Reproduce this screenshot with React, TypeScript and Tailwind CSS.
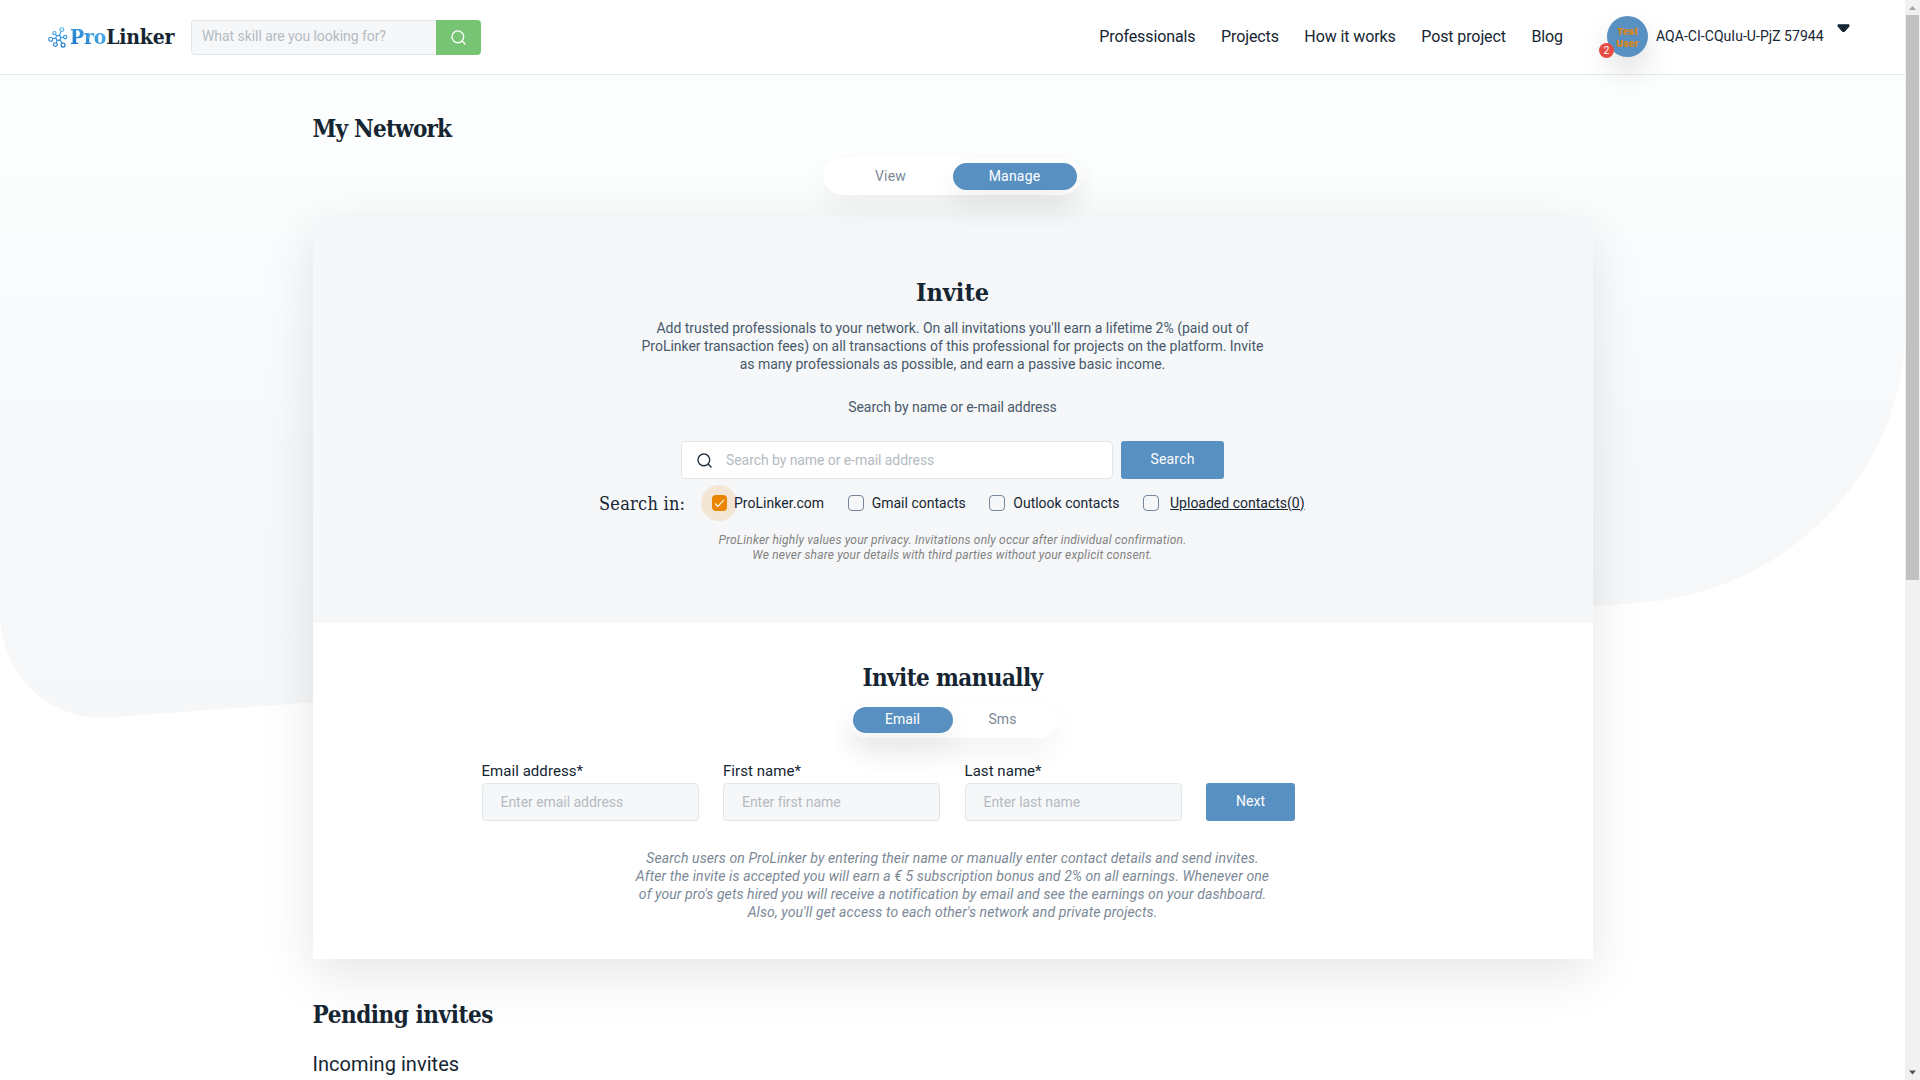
import React from "react";

const slab = "font-['DejaVu_Serif_Condensed','DejaVu_Serif',serif]";

function SearchIcon({ className }: { className: string }) {
  return (
    <svg viewBox="0 0 16 16" fill="none" stroke="currentColor" strokeWidth="1.4" strokeLinecap="round" className={className}>
      <circle cx="7.3" cy="7.3" r="6.3" />
      <path d="M12 12l3 3" />
    </svg>
  );
}

function Logo() {
  return (
    <div className="flex h-[24px] items-center">
      <svg viewBox="0 0 20 21" className="h-[21px] w-[20px] shrink-0" fill="none" stroke="url(#lg)" strokeWidth="1.15">
        <defs>
          <linearGradient id="lg" x1="0" y1="0" x2="0" y2="21" gradientUnits="userSpaceOnUse">
            <stop offset="0" stopColor="#5ab9f0" />
            <stop offset="1" stopColor="#1272c8" />
          </linearGradient>
        </defs>
        <circle cx="10.4" cy="10.8" r="2.5" />
        <circle cx="13.8" cy="2.6" r="1.9" />
        <circle cx="6.4" cy="6.1" r="1.6" />
        <circle cx="17.2" cy="10.1" r="1.7" />
        <circle cx="2.7" cy="12.2" r="2" />
        <circle cx="7.4" cy="17.6" r="1.9" />
        <circle cx="15.1" cy="18.1" r="2" />
        <path d="M11.4 8.5l1.6-4.1M8.9 8.9L7.400 7.400M12.900 10.500l2.600-.3M8 11.300l-3.300.5M9.300 13l-1.100 2.800M11.900 12.800l2 3.500" />
      </svg>
      <span className={`${slab} ml-[2px] whitespace-nowrap text-[21px] font-bold leading-[24px] tracking-[-0.2px] text-[#152532]`}>
        <span className="bg-gradient-to-bl from-[#5cc0f5] to-[#0b6cc4] bg-clip-text text-transparent">Pro</span>Linker
      </span>
    </div>
  );
}

function Header() {
  return (
    <header className="relative z-10 flex h-[75px] items-start border-b border-[#e3e8eb] bg-white">
      <div className="ml-[48px] mt-[25px] w-[143px]"><Logo /></div>
      <div className="mt-[20px] flex h-[35px] w-[290px] text-[14px]">
        <div className="w-[245px] rounded-l-[4px] border border-r-0 border-[#dfe6ea] bg-[#f6f7f9] pl-[10px] leading-[31px] tracking-[-0.06px] text-[#b4bbc2]">What skill are you looking for?</div>
        <div className="flex w-[45px] items-center justify-center rounded-r-[4px] bg-[#76c474] text-white"><SearchIcon className="size-[15px]" /></div>
      </div>
      <nav className="ml-auto mt-[25px] flex gap-[25.5px] text-[16px] leading-[24px] tracking-[-0.1px] text-[#152532]">
        <span>Professionals</span><span>Projects</span><span>How it works</span><span>Post project</span><span>Blog</span>
      </nav>
      <div className="relative ml-[44px] mt-[16px] h-[41px] w-[41px]">
        <div className="flex size-[41px] flex-col items-center justify-center rounded-full bg-[#5990c2] pt-[3px] font-['Inter',sans-serif] text-[9.5px] font-black leading-[12px] text-[#d5861c] shadow-[0_15px_30px_rgba(0,0,0,0.13)]">
          <span>Test</span><span>User</span>
        </div>
        <span className="absolute -left-[8px] top-[27px] flex size-[15px] items-center justify-center rounded-full bg-[#e94b43] text-[10.5px] text-white">2</span>
      </div>
      <span className="ml-[8px] mt-[25px] w-[170px] whitespace-nowrap text-[14px] leading-[22px] tracking-[0.04px] text-[#152532]">AQA-CI-CQuIu-U-PjZ 57944</span>
      <svg viewBox="0 0 13 9" className="ml-[11px] mr-[55px] mt-[24px] h-[9px] w-[13px]"><path d="M1 .8h11v1.5L7.5 7.5h-2L1 2.3z" fill="#152532" stroke="#152532" strokeWidth="1" strokeLinejoin="round" /></svg>
    </header>
  );
}

function Check({ label }: { label: string }) {
  return (
    <div className="flex items-center">
      <span className="size-[16px] rounded-[4px] border border-[#75869a]" />
      <span className="ml-[8px]">{label}</span>
    </div>
  );
}

function Field({ label, hint }: { label: string; hint: string }) {
  return (
    <div className="w-[217px]">
      <div className="h-[23px] text-[15px] leading-[22px] tracking-[0.05px] text-[#152532]">{label}</div>
      <div className="h-[38px] rounded-[4px] border border-[#e0e6ea] bg-[#f6f7f9] pl-[18px] text-[14px] leading-[37px] tracking-[-0.04px] text-[#b4bbc2]">{hint}</div>
    </div>
  );
}

export default function App() {
  return (
    <div className="flex h-[1080px] w-[1920px] overflow-hidden bg-white font-['Roboto',sans-serif]">
      <div className="relative h-full w-[1905px] overflow-hidden">
        <svg className="absolute left-0 top-0 h-[1080px] w-[1905px]" viewBox="0 0 1905 1080">
          <defs>
            <linearGradient id="bg" x1="0" y1="75" x2="0" y2="700" gradientUnits="userSpaceOnUse">
              <stop offset="0" stopColor="#fdfefe" />
              <stop offset="0.25" stopColor="#fbfcfd" />
              <stop offset="0.6" stopColor="#f7f8fa" />
              <stop offset="1" stopColor="#f5f7f9" />
            </linearGradient>
          </defs>
          <path d="M0 75V618C4 674 45 718 103 718L1648 602C1790 588 1905 470 1905 330V75Z" fill="url(#bg)" />
        </svg>
        <Header />
        <main className="relative mx-auto w-[1280px]">
          <h1 className={`${slab} h-[83px] pt-[37px] text-[24px] font-bold leading-[34px] tracking-[-0.8px] text-[#152532]`}>My Network</h1>
          <div className="relative z-10 ml-[511px] flex h-[37px] w-[257px] items-center rounded-full bg-white pr-[4px] text-[14px] tracking-[0.2px] shadow-[0_15px_30px_rgba(0,0,0,0.05)]">
            <span className="w-[129px] pl-[5px] text-center text-[#7b8896]">View</span>
            <span className="h-[27px] w-[124px] rounded-full bg-[#5990c2] text-center leading-[27px] text-white shadow-[0_15px_30px_rgba(0,0,0,0.07)]">Manage</span>
          </div>
          <section className="mt-[21px] h-[743px] bg-white shadow-[0_15px_50px_rgba(0,0,0,0.1)]">
            <div className="flex h-[407px] flex-col items-center bg-[#f6f7f9] pt-[59px]">
              <h2 className={`${slab} text-[25px] font-bold leading-[36px] text-[#152532]`}>Invite</h2>
              <p className="mt-[8px] whitespace-nowrap text-center text-[14px] leading-[18px] tracking-[-0.025px] text-[#47596b]">
                Add trusted professionals to your network. On all invitations you'll earn a lifetime 2% (paid out of<br />
                ProLinker transaction fees) on all transactions of this professional for projects on the platform. Invite<br />
                as many professionals as possible, and earn a passive basic income.
              </p>
              <p className="mt-[25px] text-[14px] leading-[18px] tracking-[-0.06px] text-[#47596b]">Search by name or e-mail address</p>
              <div className="mt-[25px] flex h-[38px] w-[543px] justify-between text-[14px]">
                <div className="flex w-[432px] items-center rounded-[4px] border border-[#e0e6ea] bg-white pl-[15px] text-[#b4bbc2]">
                  <SearchIcon className="size-[15px] text-[#152532]" />
                  <span className="ml-[14px] tracking-[-0.07px]">Search by name or e-mail address</span>
                </div>
                <div className="w-[103px] rounded-[3px] bg-[#5990c2] text-center leading-[36px] tracking-[0.2px] text-white">Search</div>
              </div>
              <div className="mt-[11px] flex h-[26px] w-[707px] items-center gap-[23.5px] whitespace-nowrap text-[14px] text-[#152532]">
                <span className={`${slab} w-[88.500px] text-[18px] tracking-[0.25px]`}>Search in:</span>
                <div className="flex items-center">
                  <span className="relative flex size-[16px] items-center justify-center">
                    <span className="absolute -left-[10px] -top-[10px] size-[36px] rounded-full bg-[#ea8500]/15" />
                    <span className="relative flex h-[16px] w-[15px] items-center justify-center rounded-[4px] bg-[#ea8500]">
                      <svg viewBox="0 0 12 10" className="h-[9px] w-[11px]" fill="none" stroke="white" strokeWidth="1.2"><path d="M1 5l3.2 3.2L11 1" /></svg>
                    </span>
                  </span>
                  <span className="relative ml-[7px] tracking-[0.04px]">ProLinker.com</span>
                </div>
                <Check label="Gmail contacts" />
                <Check label="Outlook contacts" />
                <div className="flex items-center">
                  <span className="size-[16px] rounded-[4px] border border-[#75869a]" />
                  <span className="ml-[11px] underline">Uploaded contacts(0)</span>
                </div>
              </div>
              <p className="mt-[17px] whitespace-nowrap text-center text-[12px] italic leading-[15px] tracking-[0.18px] text-[#828282]">
                ProLinker highly values your privacy. Invitations only occur after individual confirmation.<br />
                We never share your details with third parties without your explicit consent.
              </p>
            </div>
            <div className="flex flex-col items-center pt-[38px]">
              <h2 className={`${slab} whitespace-nowrap text-[24px] font-bold leading-[34px] tracking-[-0.6px] text-[#152532]`}>Invite manually</h2>
              <div className="mt-[7px] flex h-[36px] w-[208px] items-center rounded-full bg-white px-[4px] text-[14px] tracking-[0.1px] shadow-[0_15px_30px_rgba(0,0,0,0.05)]">
                <span className="h-[26px] w-[100px] rounded-full bg-[#5990c2] text-center leading-[25px] text-white shadow-[0_15px_30px_rgba(0,0,0,0.07)]">Email</span>
                <span className="h-[26px] w-[100px] text-center leading-[25px] text-[#7b8896]">Sms</span>
              </div>
              <div className="relative mt-[22px] flex w-[942px] items-end gap-[24.5px]">
                <Field label="Email address*" hint="Enter email address" />
                <Field label="First name*" hint="Enter first name" />
                <Field label="Last name*" hint="Enter last name" />
                <div className="h-[38px] w-[89px] rounded-[3px] bg-[#5990c2] text-center text-[14px] leading-[36px] text-white">Next</div>
              </div>
              <p className="mt-[28px] whitespace-nowrap text-center text-[14px] italic leading-[18px] tracking-[0.1px] text-[#7b8896]">
                Search users on ProLinker by entering their name or manually enter contact details and send invites.<br />
                After the invite is accepted you will earn a € 5 subscription bonus and 2% on all earnings. Whenever one<br />
                of your pro's gets hired you will receive a notification by email and see the earnings on your dashboard.<br />
                Also, you'll get access to each other's network and private projects.
              </p>
            </div>
          </section>
          <h2 className={`${slab} mt-[39px] text-[24px] font-bold leading-[34px] tracking-[-0.45px] text-[#152532]`}>Pending invites</h2>
          <h3 className="mt-[17px] text-[20px] leading-[30px] tracking-[0.05px] text-[#152532]">Incoming invites</h3>
        </main>
      </div>
      <div className="flex h-full w-[15px] flex-col items-center bg-[#f1f1f1]">
        <svg viewBox="0 0 15 15" className="size-[15px]"><path d="M4 10l3.5-4L11 10z" fill="#a3a3a3" /></svg>
        <div className="h-[565px] w-[13px] bg-[#c1c1c1]" />
        <svg viewBox="0 0 15 15" className="mt-auto size-[15px]"><path d="M4 5.500l3.500 4L11 5.500z" fill="#505050" /></svg>
      </div>
    </div>
  );
}
